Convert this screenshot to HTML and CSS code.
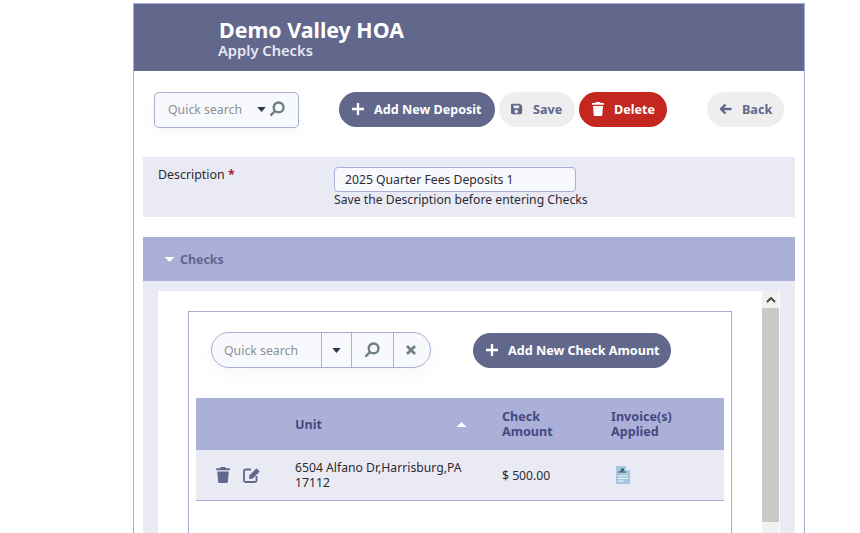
FILE: index.html
```html
<!DOCTYPE html>
<html lang="en">
<head>
<meta charset="utf-8">
<title>Apply Checks</title>
<link rel="stylesheet" href="styles.css">
</head>
<body>
<main class="page">
  <header class="banner">
    <h1>Demo Valley HOA</h1>
    <h2>Apply Checks</h2>
  </header>
  <section class="toolbar">
    <div class="search-box">
      <span class="placeholder">Quick search</span>
      <svg class="caret" viewBox="0 0 10 6"><path d="M0 0h10L5 6z"/></svg>
      <svg class="mag" viewBox="0 0 16 16"><circle cx="9.600" cy="6.400" r="4.900"/><path d="M6.200 9.800 1.400 14.600"/></svg>
    </div>
    <button class="btn primary add-deposit"><svg class="ico" viewBox="0 0 12 12"><path d="M6 0v12M0 6h12"/></svg>Add New Deposit</button>
    <button class="btn muted save"><svg class="ico fill" viewBox="0 0 14 14"><path d="M1.500 1h9L13 3.500v8A1.500 1.500 0 0 1 11.500 13h-10A1.500 1.500 0 0 1 0 11.500v-9A1.500 1.500 0 0 1 1.500 1zM3 3v3h6.500V3zm4 5.200a2 2 0 1 0 0 3.600 2 2 0 0 0 0-3.600z" fill-rule="evenodd"/></svg>Save</button>
    <button class="btn danger"><svg class="ico fill" viewBox="0 0 12 14"><path d="M4 0h4l.6 1H12v1.800H0V1h3.400zM1 4h10l-.7 9a1.100 1.100 0 0 1-1.100 1H2.800a1.100 1.100 0 0 1-1.100-1z"/></svg>Delete</button>
    <button class="btn muted back"><svg class="ico" viewBox="0 0 12 12"><path d="M11.500 6H1.200M5.500 1.500 1 6l4.500 4.500"/></svg>Back</button>
  </section>
  <section class="desc-panel">
    <label class="desc-label">Description <span class="req">*</span></label>
    <div class="desc-field">
      <div class="text-input">2025 Quarter Fees Deposits 1</div>
      <div class="hint">Save the Description before entering Checks</div>
    </div>
  </section>
  <section class="accordion">
    <div class="acc-head"><svg class="acc-caret" viewBox="0 0 12 6"><path d="M0 0h12L6 6z"/></svg>Checks</div>
    <div class="acc-body">
      <div class="scroller">
        <div class="inner">
          <div class="inner-tools">
            <div class="pill-search">
              <span class="pill-text">Quick search</span>
              <span class="pill-cell narrow"><svg class="caret" viewBox="0 0 10 6"><path d="M0 0h10L5 6z"/></svg></span>
              <span class="pill-cell wide"><svg class="mag" viewBox="0 0 16 16"><circle cx="9.600" cy="6.400" r="4.900"/><path d="M6.200 9.800 1.400 14.600"/></svg></span>
              <span class="pill-cell last"><svg class="cross" viewBox="0 0 10 10"><path d="M1 1l8 8M9 1l-8 8"/></svg></span>
            </div>
            <button class="btn primary add-check"><svg class="ico" viewBox="0 0 12 12"><path d="M6 0v12M0 6h12"/></svg>Add New Check Amount</button>
          </div>
          <div class="table">
            <div class="row head">
              <div class="c-actions"></div>
              <div class="c-unit"><span>Unit</span><svg class="sort" viewBox="0 0 12 6"><path d="M0 6h12L6 0z"/></svg></div>
              <div class="c-amt"><div class="hl">Check</div><div class="hl">Amount</div></div>
              <div class="c-inv"><div class="hl">Invoice(s)</div><div class="hl">Applied</div></div>
            </div>
            <div class="row body">
              <div class="c-actions">
                <svg class="act" viewBox="0 0 12 14"><path d="M4 0h4l.6 1H12v1.800H0V1h3.400zM1 4h10l-.7 9a1.100 1.100 0 0 1-1.100 1H2.800a1.100 1.100 0 0 1-1.100-1z"/></svg>
                <svg class="act edit" viewBox="0 0 18 16"><path class="edit-box" d="M8 2.500H2.500a1.500 1.500 0 0 0-1.500 1.500v9.500A1.500 1.500 0 0 0 2.500 15H12a1.500 1.500 0 0 0 1.500-1.500V9"/><path d="M6.500 8.200 13.500 1.200l3.300 3.300-7 7-3.800.6z"/></svg>
              </div>
              <div class="c-unit addr">6504 Alfano Dr,Harrisburg,PA 17112</div>
              <div class="c-amt val">$ 500.00</div>
              <div class="c-inv">
                <svg class="doc" viewBox="0 0 14 18"><path class="doc-bg" d="M0 0h10v4h4v14H0z"/><path class="doc-ink" d="M2 5.500h8v1H2zM4.500 5.500 5 3l2.500-1L8 5z"/><path class="doc-line" d="M2 9.500h10v1H2zM2 12h10v1H2zM2 14.500h6v1H2z"/></svg>
              </div>
            </div>
          </div>
          <div class="tail"></div>
        </div>
        <div class="scrollbar">
          <div class="sb-btn"><svg viewBox="0 0 10 6"><path d="M1 5l4-4 4 4"/></svg></div>
          <div class="sb-thumb"></div>
        </div>
      </div>
    </div>
  </section>
</main>
</body>
</html>
```
FILE: styles.css
```css
* { box-sizing: border-box; }
html, body { margin: 0; height: 533px; overflow: hidden; background: #fff; }
body { font-family: "Noto Sans", "Open Sans", sans-serif; font-size: 12.200px; color: #2a2a33; padding: 3px 0 0 133px; }
.page { width: 672px; height: 530px; border: 1px solid #a9aed6; border-bottom: 0; overflow: hidden; }
.banner { height: 67px; background: #62678c; padding: 14px 0 0 85px; color: #fff; }
.banner h1 { margin: 0; font-size: 21.400px; line-height: 24px; font-weight: 700; }
.banner h2 { margin: 0 0 0 -1px; font-size: 14.700px; line-height: 17px; font-weight: 600; color: #e6e7f3; }

.toolbar { height: 86px; display: flex; align-items: flex-start; padding: 21px 0 0 20px; }
.search-box { width: 145px; height: 36px; border: 1px solid #a9aed6; border-radius: 5px; background: #f8f9fc; display: flex; align-items: center; padding: 0 13px 2px 13px; box-shadow: 0 4px 10px rgba(150, 150, 190, .08); }
.placeholder, .pill-text { color: #8b9096; font-size: 12.300px; }
.placeholder { flex: 1; }
.caret { width: 9px; height: 5px; fill: #2e3350; }
.mag { width: 16px; height: 16px; fill: none; stroke: #6f8082; stroke-width: 2.400; }
.search-box .mag { margin-left: 3px; }

.btn { border: 0; height: 35px; border-radius: 18px; font-family: inherit; font-size: 12.600px; font-weight: 700; display: inline-flex; align-items: center; padding: 0 0 1px; white-space: nowrap; }
.ico { width: 12px; height: 12px; margin-right: 10px; fill: none; stroke: currentColor; stroke-width: 2.300; flex: none; }
.ico.fill { fill: currentColor; stroke: none; height: 14px; }
.primary { background: #62678c; color: #fff; }
.muted { background: #eeeeee; color: #62678c; }
.danger { background: #c3271f; color: #fff; width: 88px; padding-left: 13px; margin-left: 4px; }
.add-deposit { width: 156px; padding-left: 13px; margin-left: 40px; }
.save { width: 76px; padding-left: 12px; margin-left: 4px; }
.back { width: 77px; padding-left: 13px; margin-left: 40px; }

.desc-panel { margin: 0 9px; height: 60px; background: #eaeaf4; display: flex; padding: 8px 0 0 15px; }
.desc-label { width: 176px; font-size: 12.400px; line-height: 18px; padding-top: 1px; color: #2a2a33; }
.req { color: #a3243b; font-weight: 700; }
.text-input { width: 242px; height: 25px; border: 1px solid #a9aed6; border-radius: 4px; background: #f8f9fc; padding-left: 10px; line-height: 23px; margin-top: 2px; font-size: 12.200px; }
.hint { font-size: 12.200px; line-height: 16px; }

.accordion { margin: 20px 9px 0; }
.acc-head { height: 44px; background: #abb0d8; display: flex; align-items: center; padding-left: 21px; font-size: 12.400px; font-weight: 700; color: #62678c; }
.acc-caret { width: 11px; height: 5px; fill: #fff; margin-right: 5px; }
.acc-body { background: #eaeaf4; padding: 10px 15px 0; height: 260px; }
.scroller { display: flex; background: #fff; height: 250px; }
.inner { width: 604px; padding: 20px 0 0 30px; }
.inner-tools { width: 544px; height: 87px; border: 1px solid #a9aed6; border-bottom: 0; display: flex; align-items: flex-start; padding: 20px 0 0 22px; }
.pill-search { width: 220px; height: 36px; border: 1px solid #a9aed6; border-radius: 18px; background: #f8f9fc; display: flex; align-items: stretch; box-shadow: 0 6px 14px rgba(150, 150, 190, .08); }
.pill-text { width: 109px; padding-left: 12px; line-height: 36px; }
.pill-cell { display: flex; align-items: center; justify-content: center; border-left: 1px solid #a9aed6; }
.pill-cell.narrow { width: 30px; }
.pill-cell.wide { width: 42px; padding-right: 2px; }
.pill-cell.last { flex: 1; padding-right: 3px; }
.cross { width: 10px; height: 10px; fill: none; stroke: #6f8082; stroke-width: 2.800; }
.add-check { width: 198px; padding-left: 13px; margin-left: 42px; margin-top: 1px; }

.table { width: 544px; padding: 0 7px; border-left: 1px solid #a9aed6; border-right: 1px solid #a9aed6; }
.row { display: flex; }
.row.head { height: 52px; background: #abb0d8; align-items: center; font-size: 12.600px; font-weight: 700; color: #45497f; }
.hl { height: 15px; line-height: 15px; }
.row.body { height: 51px; background: #eaeaf4; border-bottom: 1px solid #a9aed6; align-items: center; font-size: 12.200px; line-height: 15px; }
.c-actions { width: 99px; display: flex; padding-left: 20px; align-items: center; }
.c-unit { width: 207px; display: flex; align-items: center; justify-content: space-between; }
.addr { display: block; padding-right: 30px; }
.sort { width: 11px; height: 5px; fill: #fff; margin-right: 35px; }
.c-amt { width: 109px; }
.c-inv { flex: 1; padding-left: 5px; }
.row.head .c-inv { padding-left: 0; }
.act { height: 16px; width: 14px; fill: #62678c; }
.act.edit { width: 18px; height: 16px; margin-left: 13px; }
.edit-box { fill: none; stroke: #62678c; stroke-width: 1.800; }
.doc { width: 14px; height: 18px; display: block; }
.doc-bg { fill: #a3c7dc; }
.doc-ink { fill: #3b5a70; }
.doc-line { fill: #eef3f7; }
.tail { width: 544px; height: 40px; border-left: 1px solid #a9aed6; border-right: 1px solid #a9aed6; }

.scrollbar { width: 17px; height: 250px; background: #f1f1f1; }
.sb-btn { height: 17px; display: flex; align-items: center; justify-content: center; }
.sb-btn svg { width: 10px; height: 6px; fill: none; stroke: #444; stroke-width: 2; }
.sb-thumb { height: 214px; background: #c9c9c9; }
```
